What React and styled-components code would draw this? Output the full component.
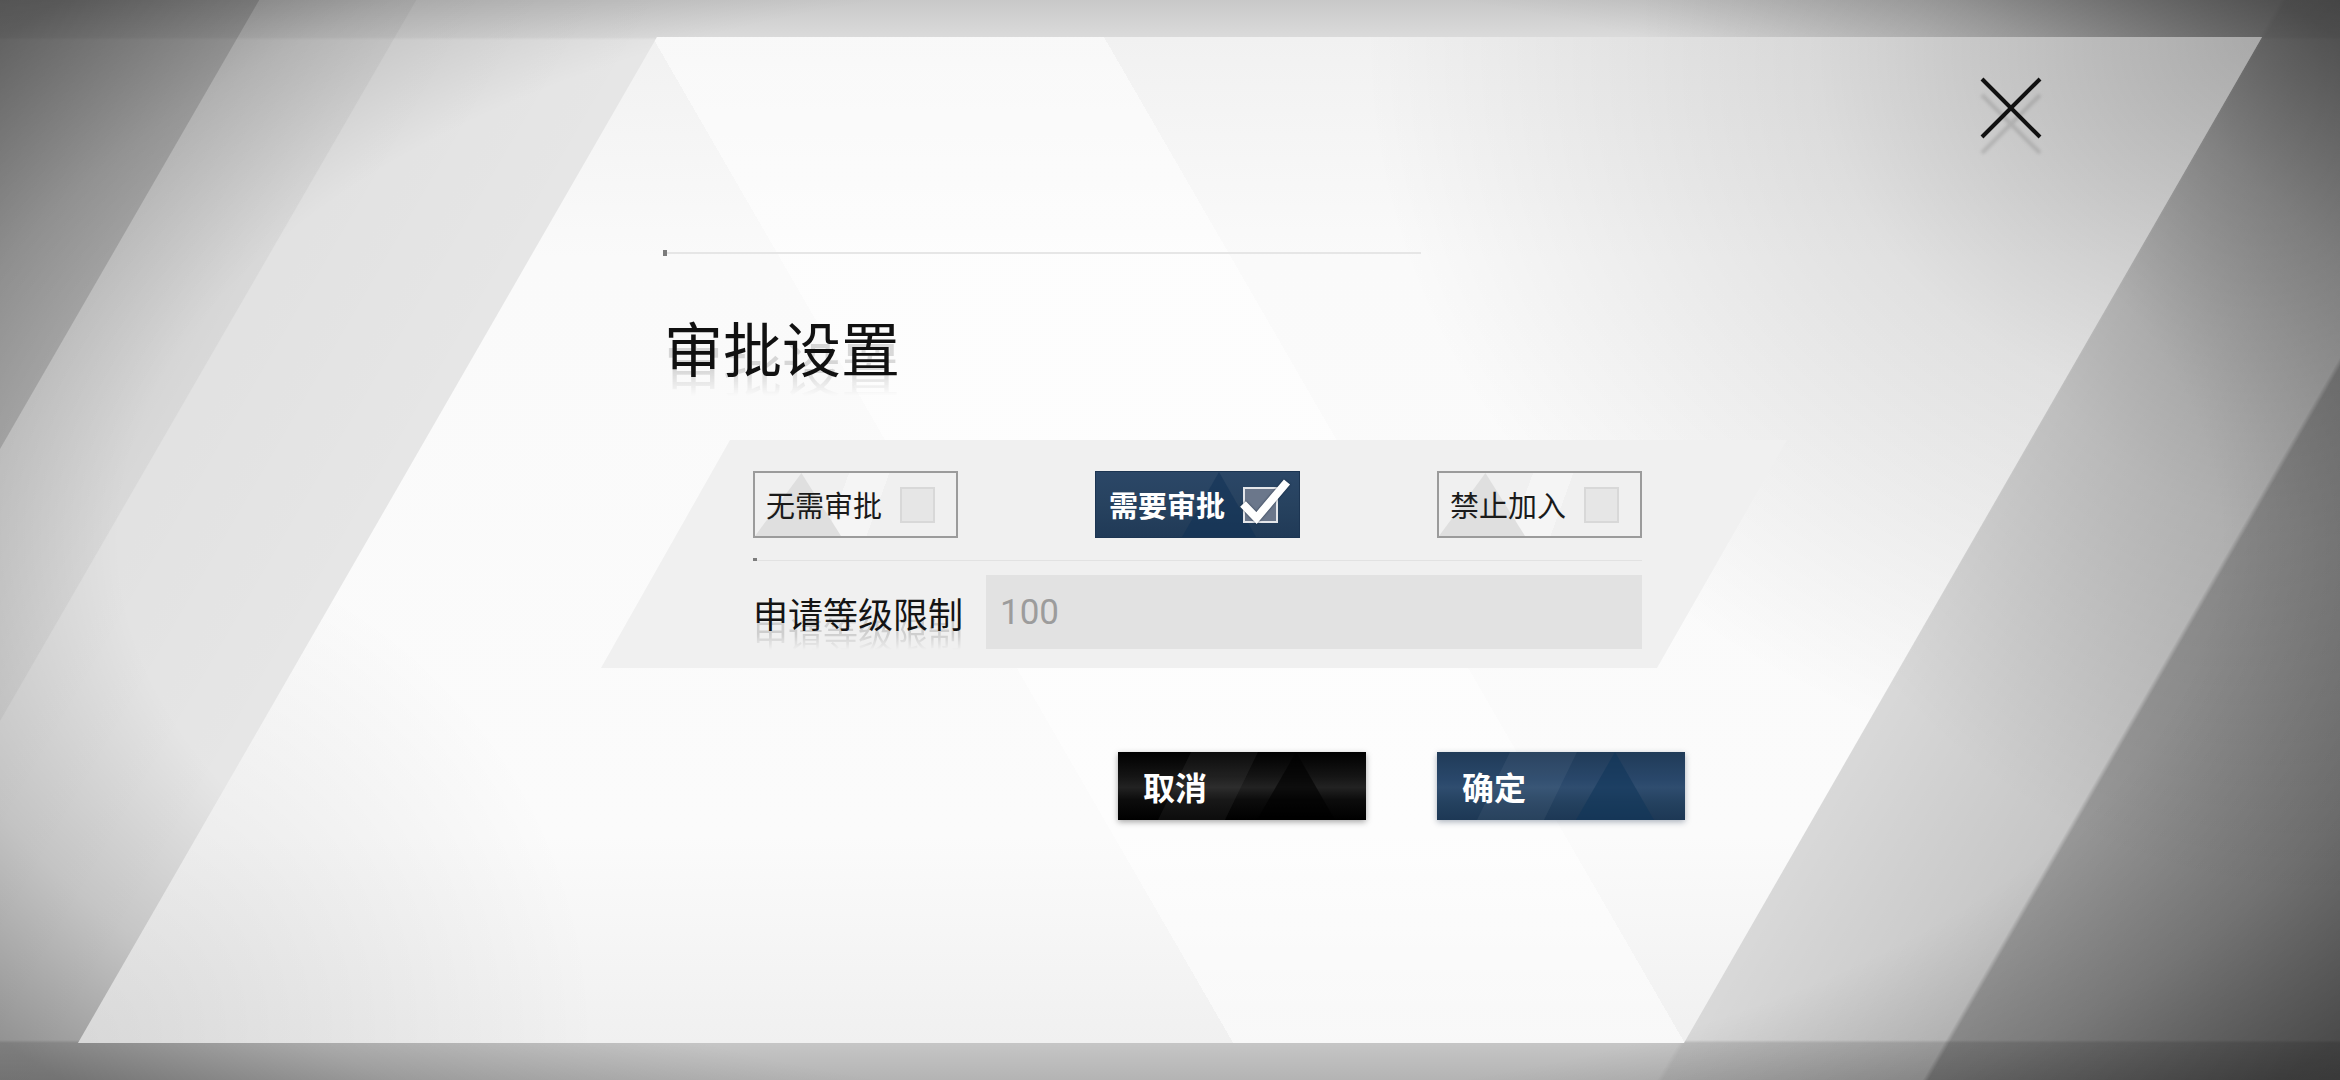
import React from "react";
import styled, { createGlobalStyle, css } from "styled-components";

const CJK = `"Noto Sans CJK SC", "Noto Sans", sans-serif`;

const GlobalStyle = createGlobalStyle`
  html, body { margin: 0; padding: 0; }
  body {
    width: 2340px;
    height: 1080px;
    overflow: hidden;
    font-family: ${CJK};
    background: #d8d8d8;
  }
  * { box-sizing: border-box; }
`;

const Screen = styled.div`
  width: 2340px;
  height: 1080px;
  overflow: hidden;
  display: flex;
  flex-direction: column;
  background:
    radial-gradient(ellipse 700px 900px at 2340px 0px, rgba(0, 0, 0, 0.42), rgba(0, 0, 0, 0.12) 60%, rgba(0, 0, 0, 0) 100%),
    radial-gradient(
      ellipse 1500px 800px at 50% 50%,
      rgba(0, 0, 0, 0) 70%,
      rgba(0, 0, 0, 0.14) 85%,
      rgba(0, 0, 0, 0.36) 100%
    ),
    linear-gradient(to bottom, rgba(0, 0, 0, 0.13), rgba(0, 0, 0, 0.05) 37px, rgba(0, 0, 0, 0) 40px),
    linear-gradient(to top, rgba(0, 0, 0, 0.22), rgba(0, 0, 0, 0.14) 37px, rgba(0, 0, 0, 0) 40px),
    linear-gradient(
      120deg,
      rgba(0, 0, 0, 0.34) 0px,
      rgba(0, 0, 0, 0.24) 224px,
      rgba(0, 0, 0, 0.11) 225px,
      rgba(0, 0, 0, 0.06) 360px,
      rgba(0, 0, 0, 0.02) 361px,
      rgba(0, 0, 0, 0) 590px,
      rgba(0, 0, 0, 0) 1975px,
      rgba(0, 0, 0, 0.06) 1980px,
      rgba(0, 0, 0, 0.14) 2205px,
      rgba(0, 0, 0, 0.34) 2210px,
      rgba(0, 0, 0, 0.5) 2566px
    ),
    #e6e6e6;
`;

const Sheet = styled.section`
  margin-top: 37px;
  height: 1006px;
  width: 2340px;
  clip-path: polygon(657px 0, 2262px 0, 1684px 100%, 78px 100%);
  padding-left: 663px;
  display: flex;
  flex-direction: column;
  align-items: flex-start;
  background:
    linear-gradient(
      60deg,
      rgba(255, 255, 255, 0) 1068px,
      rgba(255, 255, 255, 0.55) 1068px,
      rgba(255, 255, 255, 0.55) 1459px,
      rgba(255, 255, 255, 0) 1459px
    ),
    radial-gradient(ellipse 900px 760px at 2262px 0px, rgba(0, 0, 0, 0.3), rgba(0, 0, 0, 0.1) 50%, rgba(0, 0, 0, 0) 100%),
    radial-gradient(circle 520px at 78px 1006px, rgba(0, 0, 0, 0.1), rgba(0, 0, 0, 0) 100%),
    linear-gradient(to bottom, #f1f1f1 0px, #fafafa 220px, #fbfbfb 800px, #f0f0f0 1006px);
`;

const CloseRow = styled.div`
  margin-top: 40px;
  width: 1379px;
  display: flex;
  justify-content: flex-end;
`;

const CloseButton = styled.button`
  width: 62px;
  height: 62px;
  padding: 0;
  border: 0;
  background: none;
  cursor: pointer;
  filter: drop-shadow(0 16px 1.5px rgba(0, 0, 0, 0.12));

  svg {
    display: block;
  }
`;

const Rule = styled.div`
  width: ${(p) => p.$width}px;
  height: 6px;
  background:
    linear-gradient(#7c7c7c, #7c7c7c) 0 0 / 4px 6px no-repeat,
    linear-gradient(${(p) => p.$line}, ${(p) => p.$line}) 0 2px / 100% 2px no-repeat;
`;

const HeaderRule = styled(Rule)`
  margin-top: 111px;
`;

const shadowCopy = (offset) => css`
  position: relative;
  z-index: 0;
  &::after {
    content: attr(data-text);
    position: absolute;
    left: 0;
    top: ${offset}px;
    z-index: -1;
    color: rgba(0, 0, 0, 0.14);
    white-space: nowrap;
    -webkit-mask-image: linear-gradient(to bottom, #000 55%, rgba(0, 0, 0, 0) 100%);
    mask-image: linear-gradient(to bottom, #000 55%, rgba(0, 0, 0, 0) 100%);
  }
`;

const Title = styled.h1`
  margin: 61px 0 0 1px;
  font-family: ${CJK};
  font-size: 59px;
  line-height: 59px;
  font-weight: 400;
  color: #111;
  white-space: nowrap;
  ${shadowCopy(20)}
`;

const OptionsPanel = styled.div`
  margin-top: 64px;
  margin-left: -62px;
  width: 1186px;
  height: 228px;
  padding: 31px 145px 19px 152px;
  background: #f0f0f0;
  clip-path: polygon(129px 0, 100% 0, calc(100% - 130px) 100%, 0 100%);
  display: flex;
  flex-direction: column;
`;

const OptionRow = styled.div`
  display: flex;
  justify-content: space-between;
`;

const OptionBox = styled.div`
  position: relative;
  overflow: hidden;
  width: 205px;
  height: 67px;
  padding: 0 21px 0 11px;
  display: flex;
  align-items: center;
  justify-content: space-between;
  font-family: ${CJK};
  font-size: 29px;
  line-height: 1;
  ${(p) =>
    p.$selected
      ? css`
          border: 1px solid #1c3552;
          padding-left: 13px;
          color: #fff;
          font-weight: 700;
          background: linear-gradient(to bottom, #2b4767 0%, #27425f 50%, #203a57 100%);
          &::before {
            content: "";
            position: absolute;
            left: 86px;
            width: 74px;
            top: 0;
            bottom: 0;
            background: rgba(16, 50, 86, 0.55);
            clip-path: polygon(50% 0, 100% 100%, 0 100%);
          }
        `
      : css`
          border: 2px solid #9b9b9b;
          color: #1a1a1a;
          font-weight: 400;
          background: linear-gradient(
            110deg,
            rgba(0, 0, 0, 0) 42%,
            rgba(255, 255, 255, 0.35) 42%,
            rgba(255, 255, 255, 0.35) 60%,
            rgba(0, 0, 0, 0) 60%
          );
          &::before {
            content: "";
            position: absolute;
            left: 0;
            width: 86px;
            top: 0;
            bottom: 0;
            background: #dfdfdf;
            clip-path: polygon(54% 0, 100% 100%, 0 100%);
          }
        `}
`;

const OptionText = styled.span`
  position: relative;
  z-index: 1;
  white-space: nowrap;
`;

const CheckBox = styled.span`
  position: relative;
  z-index: 1;
  flex: none;
  width: 35px;
  height: 36px;
  border: 2px solid ${(p) => (p.$checked ? "#e4e6ea" : "#d8d8d8")};
  background: ${(p) => (p.$checked ? "#6b778b" : "#e6e6e6")};

  svg {
    position: absolute;
    left: -6px;
    top: -12px;
    overflow: visible;
    filter: drop-shadow(0 0 1px rgba(10, 25, 45, 0.7));
  }
`;

const Divider = styled(Rule)`
  margin-top: 20px;
`;

const InputRow = styled.div`
  margin-top: 14px;
  display: flex;
  align-items: center;
  gap: 23px;
`;

const FieldLabel = styled.label`
  font-family: ${CJK};
  font-size: 35px;
  line-height: 35px;
  font-weight: 400;
  color: #141414;
  white-space: nowrap;
  ${shadowCopy(20)}
`;

const LevelInput = styled.input`
  flex: 1;
  height: 74px;
  border: 0;
  outline: none;
  padding: 0 14px;
  background: #e2e2e2;
  font-family: Roboto, "Liberation Sans", sans-serif;
  font-size: 35px;
  color: #9c9c9c;
`;

const ButtonRow = styled.div`
  margin-top: 84px;
  margin-left: 455px;
  display: flex;
  gap: 71px;
`;

const buttonThemes = {
  cancel: {
    base: "linear-gradient(to bottom, #000 0%, #141414 35%, #222 52%, #0c0c0c 70%, #000 100%)",
    band: "rgba(255, 255, 255, 0.05)",
    tri: "rgba(0, 0, 0, 0.6)",
    shadow: "0 2px 6px rgba(0, 0, 0, 0.35)",
  },
  confirm: {
    base: "linear-gradient(to bottom, #203b58 0%, #29476a 40%, #2f4d6f 52%, #24415f 75%, #1d3855 100%)",
    band: "rgba(255, 255, 255, 0.05)",
    tri: "rgba(14, 52, 90, 0.55)",
    shadow: "0 2px 6px rgba(20, 40, 70, 0.35)",
  },
};

const ActionButton = styled.button`
  position: relative;
  overflow: hidden;
  width: 248px;
  height: 68px;
  padding: 0 0 0 25px;
  border: 0;
  display: flex;
  align-items: center;
  font-family: ${CJK};
  font-size: 32px;
  font-weight: 700;
  color: #fff;
  cursor: pointer;
  background: ${(p) => buttonThemes[p.$variant].base};
  box-shadow: ${(p) => buttonThemes[p.$variant].shadow};

  &::before {
    content: "";
    position: absolute;
    left: 40px;
    width: 100px;
    top: 0;
    bottom: 0;
    background: ${(p) => buttonThemes[p.$variant].band};
    clip-path: polygon(33% 0, 100% 0, 67% 100%, 0 100%);
  }

  &::after {
    content: "";
    position: absolute;
    left: 139px;
    width: 78px;
    top: 0;
    bottom: 0;
    background: ${(p) => buttonThemes[p.$variant].tri};
    clip-path: polygon(50% 0, 100% 100%, 0 100%);
  }

  span {
    position: relative;
    z-index: 1;
  }
`;

const CheckMark = () => (
  <svg width="52" height="50" viewBox="0 0 52 50">
    <polyline
      points="4,27 17.5,41 48,5"
      fill="none"
      stroke="#ffffff"
      strokeWidth="8"
      strokeLinejoin="miter"
    />
  </svg>
);

const CloseIcon = () => (
  <svg width="62" height="62" viewBox="0 0 62 62">
    <line x1="2" y1="2" x2="60" y2="60" stroke="#111" strokeWidth="4" />
    <line x1="60" y1="2" x2="2" y2="60" stroke="#111" strokeWidth="4" />
  </svg>
);

const options = [
  { key: "none", label: "无需审批", checked: false },
  { key: "need", label: "需要审批", checked: true },
  { key: "ban", label: "禁止加入", checked: false },
];

export default function App() {
  return (
    <>
      <GlobalStyle />
      <Screen>
        <Sheet>
          <CloseRow>
            <CloseButton aria-label="关闭">
              <CloseIcon />
            </CloseButton>
          </CloseRow>
          <HeaderRule $width={758} $line="#e6e6e6" />
          <Title data-text="审批设置">审批设置</Title>
          <OptionsPanel>
            <OptionRow>
              {options.map((o) => (
                <OptionBox key={o.key} $selected={o.checked}>
                  <OptionText>{o.label}</OptionText>
                  <CheckBox $checked={o.checked}>{o.checked && <CheckMark />}</CheckBox>
                </OptionBox>
              ))}
            </OptionRow>
            <Divider $width={889} $line="#e2e2e2" />
            <InputRow>
              <FieldLabel data-text="申请等级限制">申请等级限制</FieldLabel>
              <LevelInput defaultValue="100" readOnly />
            </InputRow>
          </OptionsPanel>
          <ButtonRow>
            <ActionButton $variant="cancel">
              <span>取消</span>
            </ActionButton>
            <ActionButton $variant="confirm">
              <span>确定</span>
            </ActionButton>
          </ButtonRow>
        </Sheet>
      </Screen>
    </>
  );
}
